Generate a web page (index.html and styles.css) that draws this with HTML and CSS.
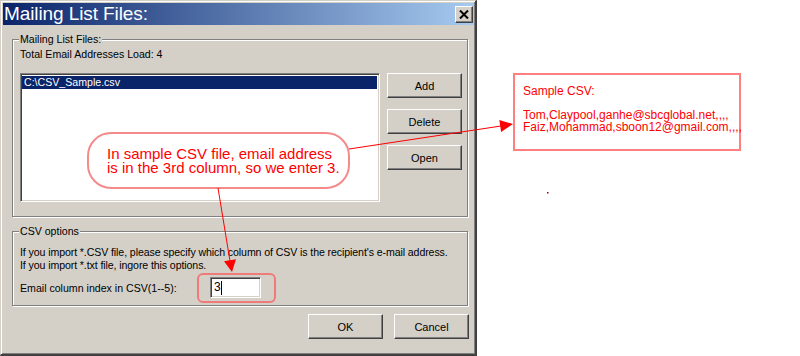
FILE: index.html
```html
<!DOCTYPE html>
<html lang="en">
<head>
    <meta charset="UTF-8">
    <title>Mailing List Files</title>
    <link rel="stylesheet" href="styles.css">
</head>
<body>
    <div class="page">
        <div class="dialog">
            <div class="titlebar">
                <span class="title">Mailing List Files:</span>
                <span class="close-btn">
                    <svg width="10" height="9" viewBox="0 0 10 9">
                        <path d="M1 0.5 L9 8.5 M9 0.5 L1 8.5" stroke="#000" stroke-width="2"/>
                    </svg>
                </span>
            </div>

            <div class="dialog-body">
                <div class="group group-files">
                    <div class="group-title">Mailing List Files:</div>
                    <div class="total">Total Email Addresses Load: 4</div>
                    <div class="files-row">
                        <div class="listbox">
                            <div class="list-item selected">C:\CSV_Sample.csv</div>
                        </div>
                        <div class="side-buttons">
                            <button class="btn">Add</button>
                            <button class="btn">Delete</button>
                            <button class="btn">Open</button>
                        </div>
                    </div>
                </div>

                <div class="group group-csv">
                    <div class="group-title">CSV options</div>
                    <div class="csv-help">
                        <p>If you import *.CSV file, please specify which column of CSV is the recipient's e-mail address.</p>
                        <p>If you import *.txt file, ingore this options.</p>
                    </div>
                    <div class="index-row">
                        <span class="index-label">Email column index in CSV(1--5):</span>
                        <span class="highlight">
                            <span class="textbox">3<span class="caret"></span></span>
                        </span>
                    </div>
                </div>

                <div class="dialog-buttons">
                    <button class="btn">OK</button>
                    <button class="btn">Cancel</button>
                </div>
            </div>
        </div>

        <div class="sample-box">
            <p>Sample CSV:</p>
            <p>&nbsp;</p>
            <p>Tom,Claypool,ganhe@sbcglobal.net,,,,</p>
            <p>Faiz,Mohammad,sboon12@gmail.com,,,,</p>
        </div>
    </div>

    <!-- annotations drawn over the dialog -->
    <div class="callout">
        In sample CSV file, email address<br>
        is in the 3rd column, so we enter 3.
    </div>

    <svg class="arrows" width="800" height="356" viewBox="0 0 800 356">
        <line x1="349" y1="149" x2="501" y2="126" stroke="#f00" stroke-width="1"/>
        <polygon points="513,124 499.3,120.1 501.1,131.9" fill="#f00"/>
        <line x1="218" y1="188" x2="230" y2="261" stroke="#f00" stroke-width="1"/>
        <polygon points="232,272 236,259.2 224,261.2" fill="#f00"/>
        <rect x="547" y="192" width="1.5" height="1.5" fill="#900"/>
    </svg>
</body>
</html>
```

FILE: styles.css
```css
* {
    margin: 0;
    padding: 0;
    box-sizing: border-box;
}

body {
    background: #fff;
    font-family: "Liberation Sans", Arial, sans-serif;
    font-size: 10.6px;
    color: #000;
    width: 800px;
    height: 356px;
    overflow: hidden;
    position: relative;
}

.page {
    display: flex;
    align-items: flex-start;
}

/* dialog window */
.dialog {
    width: 477px;
    height: 356px;
    flex-shrink: 0;
    background: #d4d0c8;
    border: 1px solid;
    border-width: 1px 2px 2px 1px;
    border-color: #d4d0c8 #404040 #404040 #d4d0c8;
    box-shadow: inset 1px 1px #fff, inset -1px -1px #808080;
    padding: 2px 1px 2px 2px;
}

.titlebar {
    height: 22px;
    display: flex;
    align-items: center;
    justify-content: space-between;
    background: linear-gradient(to right, #0a246a, #a6caf0);
    padding: 0 1px 0 1px;
}

.title {
    color: #fff;
    font-size: 19px;
    line-height: 22px;
    letter-spacing: -0.1px;
}

.close-btn {
    width: 18px;
    height: 17px;
    display: flex;
    align-items: center;
    justify-content: center;
    background: #d4d0c8;
    border: 1px solid;
    border-color: #fff #404040 #404040 #fff;
    box-shadow: inset -1px -1px #808080;
}

.dialog-body {
    padding: 14px 0 0 9px;
}

.group {
    width: 456px;
    border: 1px solid #808080;
    box-shadow: inset 1px 1px #fff, 1px 1px #fff;
    padding: 0 5px 14px 7px;
    line-height: 13px;
    white-space: nowrap;
}

.group-title {
    display: table;
    margin: -7px 0 0 -1px;
    padding: 0 1px;
    background: #d4d0c8;
    line-height: 13px;
}

.total {
    margin-top: 2px;
}

.files-row {
    display: flex;
    justify-content: space-between;
    margin-top: 12px;
}

.listbox {
    width: 360px;
    height: 129px;
    background: #fff;
    border: 1px solid;
    border-color: #808080 #fff #fff #808080;
    box-shadow: inset 1px 1px #404040, inset -1px -1px #d4d0c8;
    padding: 2px 2px 0 1px;
}

.list-item {
    height: 13px;
    line-height: 13px;
    padding-left: 2px;
}

.list-item.selected {
    background: #0a246a;
    color: #fff;
}

.side-buttons {
    display: flex;
    flex-direction: column;
    gap: 11px;
}

.btn {
    width: 75px;
    height: 25px;
    background: #d4d0c8;
    border: 1px solid;
    border-color: #fff #404040 #404040 #fff;
    box-shadow: inset -1px -1px #808080;
    font-family: "Liberation Sans", Arial, sans-serif;
    font-size: 11px;
    color: #000;
}

.group-csv {
    margin-top: 14px;
    padding-bottom: 2px;
}

.csv-help {
    margin-top: 8px;
    letter-spacing: -0.1px;
}

.index-row {
    display: flex;
    align-items: center;
    height: 30px;
    margin-top: 1px;
}

.index-label {
    width: 177px;
}

.highlight {
    width: 79px;
    height: 30px;
    border: 2px solid #ee7a7a;
    border-radius: 6px;
    padding: 2px 0 0 11px;
}

.textbox {
    display: flex;
    align-items: center;
    width: 51px;
    height: 21px;
    background: #fff;
    border: 1px solid;
    border-color: #808080 #fff #fff #808080;
    box-shadow: inset 1px 1px #404040, inset -1px -1px #d4d0c8;
    padding-left: 3px;
    font-size: 12px;
}

.caret {
    width: 1px;
    height: 14px;
    background: #000;
}

.dialog-buttons {
    display: flex;
    justify-content: flex-end;
    gap: 11px;
    width: 457px;
    margin-top: 8px;
}

/* annotations */
.sample-box {
    width: 228px;
    height: 78px;
    margin: 73px 0 0 36px;
    border: 2px solid #ff8080;
    padding: 10px 0 0 8px;
    color: #f00;
    font-size: 12px;
    line-height: 12px;
    white-space: nowrap;
}

.callout {
    position: absolute;
    left: 87px;
    top: 132px;
    width: 263px;
    height: 57px;
    background: #fff;
    border: 2px solid #f58a8a;
    border-radius: 24px;
    padding: 13px 0 0 18px;
    color: #f00;
    font-size: 15px;
    line-height: 14px;
    white-space: nowrap;
}

.arrows {
    position: absolute;
    left: 0;
    top: 0;
    pointer-events: none;
}
```
